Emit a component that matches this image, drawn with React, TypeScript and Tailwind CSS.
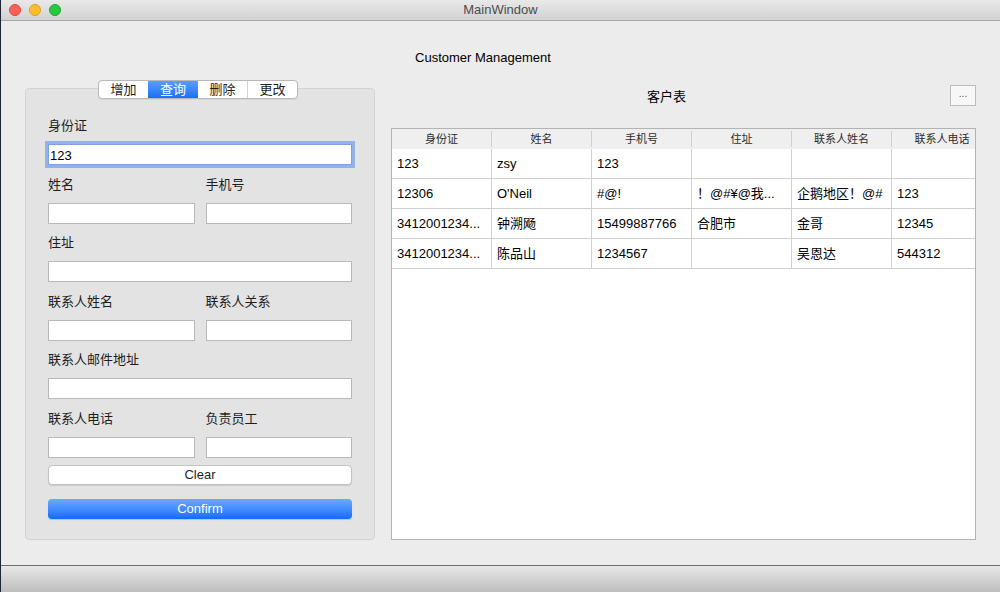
import React from "react";

const rows = [
  ["123", "zsy", "123", "", "", ""],
  ["12306", "O'Neil", "#@!", "！@#¥@我...", "企鹅地区！@#", "123"],
  ["3412001234...", "钟溯飏", "15499887766", "合肥市", "金哥", "12345"],
  ["3412001234...", "陈品山", "1234567", "", "吴恩达", "544312"],
];
const headers = ["身份证", "姓名", "手机号", "住址", "联系人姓名", "联系人电话"];

function Label({ children }: { children: React.ReactNode }) {
  return <div className="h-[16px] leading-[16px] mb-[10px] text-[13px] text-[#1e1e1e]">{children}</div>;
}

function Input({ value = "", focus = false }: { value?: string; focus?: boolean }) {
  return (
    <div
      className={
        "h-[21px] bg-white flex items-center pl-[1px] text-[13px] text-black " +
        (focus
          ? "border border-[#7ea2dd] shadow-[0_0_0_3px_#91b3ea] pt-[2px]"
          : "border border-[#b9b9b9]")
      }
    >
      {value}
    </div>
  );
}

export default function App() {
  return (
    <div className="w-[1000px] h-[592px] flex flex-col bg-[#ececec] border-l border-[#1f2633] overflow-hidden font-['Liberation_Sans','Noto_Sans_CJK_SC',sans-serif]">
      {/* Title bar */}
      <div className="relative h-[21px] shrink-0 border-b border-[#a9a9a9] bg-gradient-to-b from-[#e9e9e9] to-[#d2d2d2] flex items-center justify-center">
        <div className="absolute left-[8px] top-[4px] flex gap-[8px]">
          <div className="w-[12px] h-[12px] rounded-full bg-[#fe5f57] border border-[#e2463f]" />
          <div className="w-[12px] h-[12px] rounded-full bg-[#febc2e] border border-[#dfa023]" />
          <div className="w-[12px] h-[12px] rounded-full bg-[#28c840] border border-[#1aab29]" />
        </div>
        <span className="text-[13px] text-[#4c4c4c]">MainWindow</span>
      </div>

      {/* Body */}
      <div className="flex-1 flex flex-col">
        <div className="pt-[29px] h-[44px] flex justify-center pr-[35px] text-[13px] text-black leading-[16px]">
          Customer Management
        </div>
        <div className="mt-[15px] flex pl-[24px] gap-[16px]">
          {/* Left column */}
          <div className="w-[350px] flex flex-col">
            <div className="relative z-10 flex justify-center pr-[4px]">
              <div className="flex h-[19px] rounded-[4px] border border-[#b8b8b8] bg-white overflow-hidden text-[13px] shadow-[0_1px_0_rgba(0,0,0,0.05)]">
                <div className="w-[49px] flex items-center justify-center text-[#1e1e1e]">增加</div>
                <div className="w-[50px] flex items-center justify-center text-white bg-gradient-to-b from-[#5a9cfc] to-[#1670f6]">查询</div>
                <div className="w-[50px] flex items-center justify-center text-[#1e1e1e] border-r border-[#d4d4d4]">删除</div>
                <div className="w-[49px] flex items-center justify-center text-[#1e1e1e]">更改</div>
              </div>
            </div>
            <div className="mt-[-11px] h-[452px] rounded-[4px] border border-[#d3d3d3] bg-[#e3e3e3] px-[22px] pt-[29px]">
              <Label>身份证</Label>
              <Input value="123" focus />
              <div className="mt-[11.5px] grid grid-cols-2 gap-x-[11px]">
                <div>
                  <Label>姓名</Label>
                  <Input />
                </div>
                <div>
                  <Label>手机号</Label>
                  <Input />
                </div>
              </div>
              <div className="mt-[11.5px]">
                <Label>住址</Label>
                <Input />
              </div>
              <div className="mt-[11.5px] grid grid-cols-2 gap-x-[11px]">
                <div>
                  <Label>联系人姓名</Label>
                  <Input />
                </div>
                <div>
                  <Label>联系人关系</Label>
                  <Input />
                </div>
              </div>
              <div className="mt-[11.5px]">
                <Label>联系人邮件地址</Label>
                <Input />
              </div>
              <div className="mt-[11.5px] grid grid-cols-2 gap-x-[11px]">
                <div>
                  <Label>联系人电话</Label>
                  <Input />
                </div>
                <div>
                  <Label>负责员工</Label>
                  <Input />
                </div>
              </div>
              <div className="mt-[7px] h-[20px] rounded-[4px] border border-[#c3c3c3] bg-white shadow-[0_1px_1px_rgba(0,0,0,0.12)] flex items-center justify-center text-[13px] text-[#1e1e1e]">
                Clear
              </div>
              <div className="mt-[14px] h-[20px] rounded-[4px] bg-gradient-to-b from-[#6aa9ff] to-[#0f6bff] shadow-[0_1px_1px_rgba(0,0,0,0.15)] flex items-center justify-center text-[13px] text-white">
                Confirm
              </div>
            </div>
          </div>

          {/* Right column */}
          <div className="w-[585px] flex flex-col">
            <div className="flex items-start h-[26px]">
              <div className="flex-1 flex justify-center pt-[9px] pr-[8px] text-[13px] leading-[16px] text-black">客户表</div>
              <div className="mt-[5px] w-[26px] h-[21px] border border-[#bdbdbd] bg-[#f7f7f7] flex items-center justify-center text-[10px] text-[#555] leading-none pb-[3px]">
                ...
              </div>
            </div>
            <div className="mt-[22px] h-[412px] border border-[#b3b3b3] bg-white overflow-hidden">
              <div className="w-[600px]">
                <div className="flex h-[20px] bg-[#efefef]">
                  {headers.map((h, i) => (
                    <div key={i} className="w-[100px] h-full flex items-center">
                      <div className="flex-1 text-center text-[11px] text-[#2b2b2b]">{h}</div>
                      {i < headers.length - 1 && <div className="w-px h-[16px] bg-[#cfcfcf]" />}
                    </div>
                  ))}
                </div>
                {rows.map((r, ri) => (
                  <div key={ri} className="flex h-[30px]">
                    {r.map((c, ci) => (
                      <div
                        key={ci}
                        className="w-[100px] h-full border-b border-r border-[#d0d0d0] pl-[5px] flex items-center text-[13px] text-black whitespace-nowrap overflow-hidden"
                      >
                        {c}
                      </div>
                    ))}
                  </div>
                ))}
              </div>
            </div>
          </div>
        </div>
      </div>

      {/* Status bar */}
      <div className="h-[27px] shrink-0 border-t border-[#6e6e6e] bg-gradient-to-b from-[#e8e8e8] to-[#bdbdbd]" />
    </div>
  );
}
